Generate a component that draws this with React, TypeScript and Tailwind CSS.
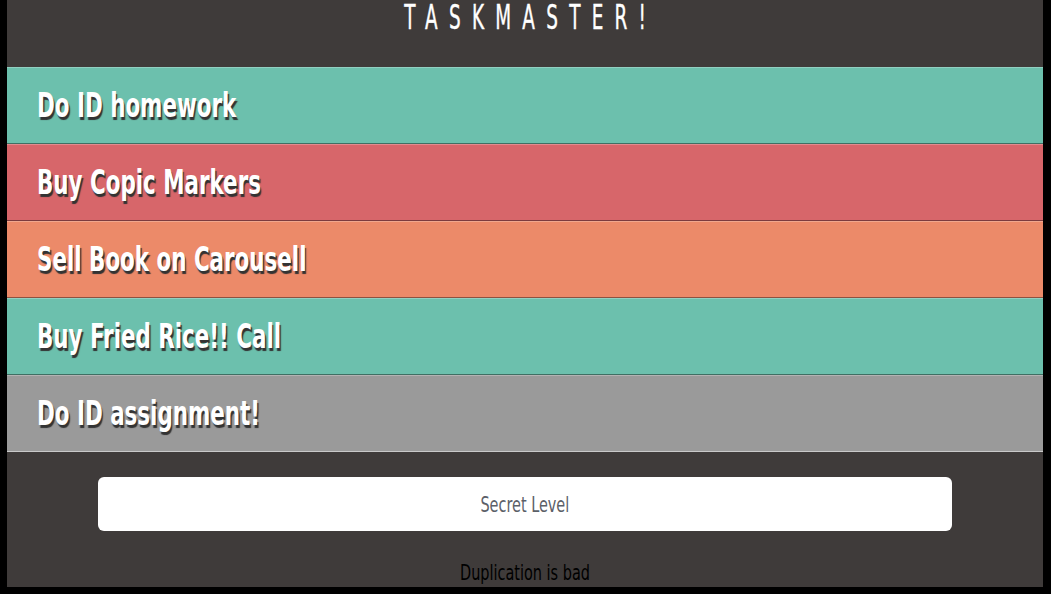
import React from 'react';

const tasks = [
  { label: 'Do ID homework', bg: 'bg-[#6cc0ad]', bottom: 'border-b-[#3f6f63]' },
  { label: 'Buy Copic Markers', bg: 'bg-[#d7666a]', bottom: 'border-b-[#7d3b3e]' },
  { label: 'Sell Book on Carousell', bg: 'bg-[#ec8a69]', bottom: 'border-b-[#8c5241]' },
  { label: 'Buy Fried Rice!! Call', bg: 'bg-[#6cc0ad]', bottom: 'border-b-[#3f6f63]' },
  { label: 'Do ID assignment!', bg: 'bg-[#9a9a9a]', bottom: 'border-b-[#c9c9c9]' },
];

const font = { fontFamily: '"DejaVu Sans Condensed", "Liberation Sans", sans-serif' };

// condensed look: squeeze glyphs horizontally
function Narrow({ children, className = '' }: { children: React.ReactNode; className?: string }) {
  return <span className={`inline-block whitespace-nowrap ${className}`}>{children}</span>;
}

export default function App() {
  return (
    <div className="w-[1051px] h-[594px] bg-black overflow-hidden" style={font}>
      <div className="ml-[7px] w-[1036px] h-[587px] bg-[#3f3b3a] overflow-hidden flex flex-col">
        {/* Title */}
        <h1 className="shrink-0 h-[67px] flex justify-center text-white text-[33px] leading-[35px] [-webkit-text-stroke:0.4px_white]">
          <Narrow className="scale-x-[0.62] origin-center tracking-[0.55em] pl-[0.55em]">TASKMASTER!</Narrow>
        </h1>

        {/* Task list */}
        <ul className="shrink-0">
          {tasks.map((t) => (
            <li
              key={t.label}
              className={`${t.bg} ${t.bottom} h-[77px] border-t border-t-white/25 border-b flex items-center pl-[30px] text-white text-[34px] font-bold [text-shadow:2px_3px_1px_#333]`}
            >
              <Narrow className="scale-x-[0.7] origin-left">{t.label}</Narrow>
            </li>
          ))}
        </ul>

        {/* Secret level button */}
        <div className="shrink-0 px-[91px] pt-[25px]">
          <button className="w-full h-[54px] bg-white rounded-[6px] text-[#5b6068] text-[22px] flex items-center justify-center">
            <Narrow className="scale-x-[0.73] origin-center">Secret Level</Narrow>
          </button>
        </div>

        <p className="shrink-0 flex justify-center text-black text-[22px] mt-[25px]">
          <Narrow className="scale-x-[0.73] origin-center">Duplication is bad</Narrow>
        </p>
      </div>
    </div>
  );
}
